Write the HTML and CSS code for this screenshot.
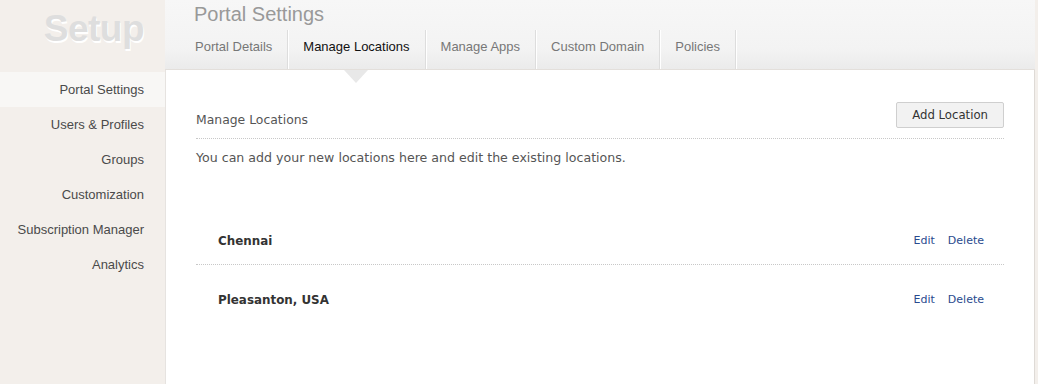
FILE: index.html
```html
<!DOCTYPE html>
<html lang="en">
<head>
    <meta charset="UTF-8">
    <title>Setup - Manage Locations</title>
    <link rel="stylesheet" href="styles.css">
</head>
<body>
<div class="page">
    <div class="sidebar">
        <div class="setup-title">Setup</div>
        <ul class="side-nav">
            <li class="active">Portal Settings</li>
            <li>Users &amp; Profiles</li>
            <li>Groups</li>
            <li>Customization</li>
            <li>Subscription Manager</li>
            <li>Analytics</li>
        </ul>
    </div>
    <div class="main">
        <div class="header">
            <h1>Portal Settings</h1>
            <div class="tabs">
                <div class="tab">Portal Details</div>
                <div class="tab active">Manage Locations</div>
                <div class="tab">Manage Apps</div>
                <div class="tab">Custom Domain</div>
                <div class="tab">Policies</div>
            </div>
        </div>
        <div class="panel">
            <div class="panel-head">
                <h2>Manage Locations</h2>
                <button class="add-btn">Add Location</button>
            </div>
            <p class="desc">You can add your new locations here and edit the existing locations.</p>
            <div class="locations">
                <div class="loc-row">
                    <span class="loc-name">Chennai</span>
                    <span class="loc-actions"><a href="#">Edit</a><a href="#">Delete</a></span>
                </div>
                <div class="loc-row">
                    <span class="loc-name">Pleasanton, USA</span>
                    <span class="loc-actions"><a href="#">Edit</a><a href="#">Delete</a></span>
                </div>
            </div>
        </div>
    </div>
</div>
</body>
</html>
```

FILE: styles.css
```css
body {
    margin: 0;
    background: #f3efeb;
    font-family: "Liberation Sans", Arial, sans-serif;
    color: #444;
}
.page {
    display: flex;
    height: 384px;
    overflow: hidden;
}
.sidebar {
    width: 165px;
    flex-shrink: 0;
}
.setup-title {
    height: 72px;
    box-sizing: border-box;
    padding: 8px 21px 0 0;
    text-align: right;
    font-size: 37px;
    font-weight: bold;
    letter-spacing: -0.5px;
    color: #dedede;
    text-shadow: 1px 2px 0 #fff;
}
.side-nav {
    list-style: none;
    margin: 0;
    padding: 0;
}
.side-nav li {
    height: 35px;
    line-height: 35px;
    padding-right: 21px;
    text-align: right;
    font-size: 13px;
    color: #4a4a4a;
}
.side-nav li.active {
    background: #f8f7f5;
}
.main {
    flex: 1;
    margin-right: 3px;
    display: flex;
    flex-direction: column;
}
.header {
    height: 70px;
    background: linear-gradient(#f7f7f7, #f3f3f3 70%, #ebebeb);
    border-bottom: 1px solid #e3dfdb;
    box-sizing: border-box;
}
.header h1 {
    margin: 0;
    padding: 3px 0 0 29px;
    height: 30px;
    box-sizing: border-box;
    font-size: 20px;
    font-weight: normal;
    color: #999;
}
.tabs {
    display: flex;
    padding-left: 15px;
    height: 39px;
}
.tab {
    padding: 0 15px;
    line-height: 34px;
    font-size: 13px;
    color: #777;
    border-right: 1px solid #ddd;
    box-shadow: 1px 0 0 #fff;
    position: relative;
}
.tab.active {
    color: #111;
}
.tab.active::after {
    content: "";
    position: absolute;
    left: 50%;
    bottom: -14px;
    margin-left: -12px;
    border-left: 12px solid transparent;
    border-right: 12px solid transparent;
    border-top: 13px solid #e8e8e8;
    z-index: 2;
}
.panel {
    flex: 1;
    background: #fff;
    border-left: 1px solid #e6e3e0;
    border-right: 1px solid #dedad6;
    padding: 32px 30px 0 30px;
    font-family: "DejaVu Sans", Verdana, sans-serif;
}
.panel-head {
    display: flex;
    justify-content: space-between;
    align-items: flex-end;
    padding-bottom: 10px;
    border-bottom: 1px dotted #c8c8c8;
}
.panel-head h2 {
    margin: 0 0 1px;
    font-size: 12.4px;
    font-weight: normal;
    color: #555;
}
.add-btn {
    height: 26px;
    padding: 0 15px;
    font-family: inherit;
    font-size: 11.7px;
    color: #333;
    background: #f2f2f2;
    border: 1px solid #cfcfcf;
    border-radius: 2px;
}
.desc {
    margin: 11px 0 0;
    font-size: 12.6px;
    line-height: 16px;
    color: #555;
}
.locations {
    margin-top: 40px;
}
.loc-row {
    display: flex;
    justify-content: space-between;
    padding: 28px 20px 16px 22px;
    line-height: 14px;
}
.loc-row + .loc-row {
    border-top: 1px dotted #c8c8c8;
}
.loc-name {
    font-size: 11.9px;
    font-weight: bold;
    color: #333;
}
.loc-actions {
    display: flex;
    gap: 13px;
    font-size: 11px;
}
.loc-actions a {
    color: #2a4a8e;
    text-decoration: none;
}
```
